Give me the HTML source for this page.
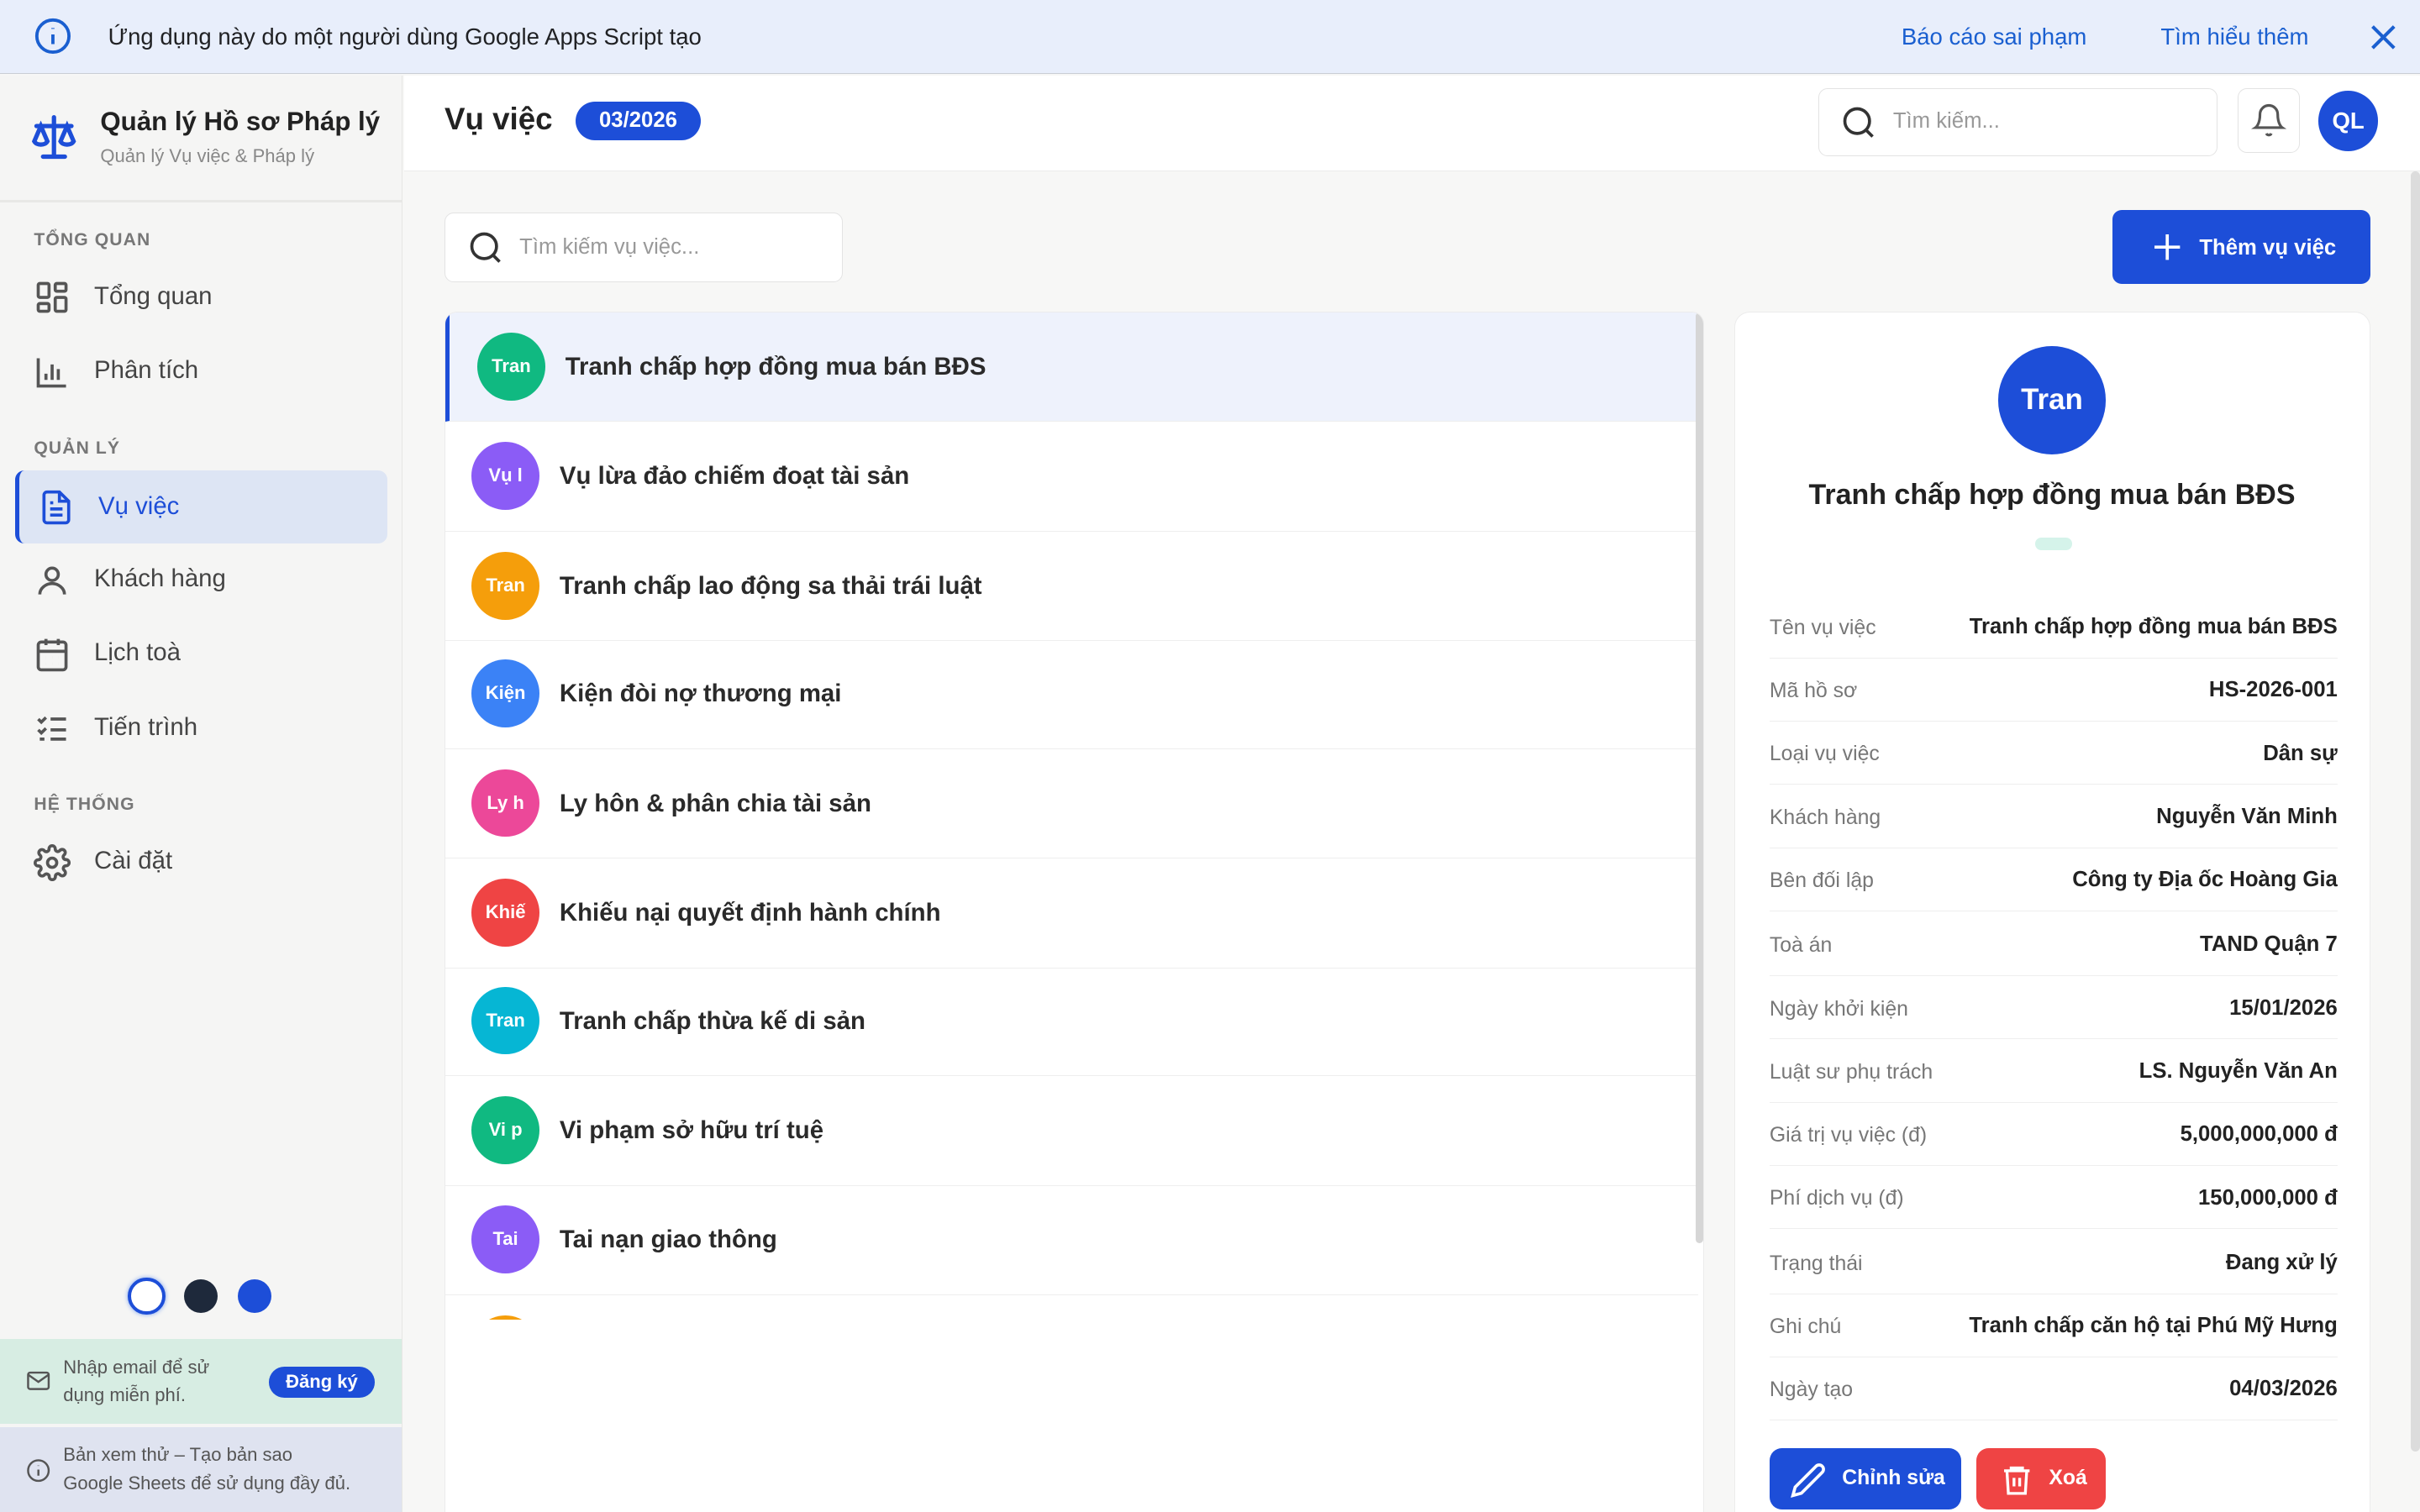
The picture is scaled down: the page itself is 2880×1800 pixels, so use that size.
<!DOCTYPE html>
<html><head><meta charset="utf-8">
<style>
html{zoom:1.836735;overflow:hidden;height:980px}
*{box-sizing:border-box;margin:0;padding:0}
body{width:1568px;height:980px;overflow:hidden;font-family:"Liberation Sans","Noto Sans CJK JP",sans-serif;background:#f7f7f6;color:#1f1f1f;position:relative}
.abs{position:absolute}
.banner{left:0;top:0;width:1568px;height:48px;background:#e8eefb;border-bottom:1px solid #c9cdd4}
.banner .t{left:70px;top:15px;font-size:15px;color:#202124}
.banner a{position:absolute;top:15px;font-size:15px;color:#1a5fd0;text-decoration:none}
.side{left:0;top:49px;width:261px;height:931px;background:#f5f5f4;border-right:1px solid #e6e6e4;overflow:hidden}
.logo{left:0;top:0;width:261px;height:82px;border-bottom:2px solid #e8e8e6}
.sec{left:22px;font-size:11.5px;font-weight:bold;color:#777;letter-spacing:.6px}
.item{left:10px;width:241px;height:47px;font-size:16px;color:#444}
.item span{position:absolute;left:51px;top:14px}
.item svg{position:absolute;left:12px;top:12px}
.main-h{left:262px;top:49px;width:1306px;height:62px;background:#fff;border-bottom:1px solid #ececec}
.row{position:absolute;left:0;width:812px;height:71px;border-bottom:1px solid #eeeeee}
.av{position:absolute;left:17px;top:13px;width:44px;height:44px;border-radius:50%;color:#fff;font-size:12px;font-weight:bold;text-align:center;line-height:44px}
.row .n{position:absolute;left:74px;top:26px;font-size:16px;font-weight:bold;color:#2a2a2a}
.d{position:absolute;left:22px;width:368px;height:41.2px;border-bottom:1px solid #eeeeee;font-size:13.5px}
.d .l{position:absolute;left:0;top:14px;color:#777}
.d .v{position:absolute;right:0;top:13px;font-weight:bold;color:#222;font-size:14px}
</style></head><body>

<div class="abs banner">
<svg class="abs" style="left:22px;top:11px" width="25" height="25" viewBox="0 0 24 24" fill="none" stroke="#1a5fd0" stroke-width="2"><circle cx="12" cy="12" r="10"/><path d="M12 11v6M12 7v.5"/></svg>
<div class="abs t">Ứng dụng này do một người dùng Google Apps Script tạo</div>
<a style="left:1232px">Báo cáo sai phạm</a>
<a style="left:1400px">Tìm hiểu thêm</a>
<svg class="abs" style="left:1534px;top:14px" width="20" height="20" viewBox="0 0 20 20" stroke="#1a5fd0" stroke-width="2.2"><path d="M3 3l14 14M17 3L3 17"/></svg>
</div>

<div class="abs side">
 <div class="abs logo">
  <svg class="abs" style="left:18px;top:22px" width="34" height="36" viewBox="0 0 24 24" fill="none" stroke="#1d4ed8" stroke-width="2" stroke-linecap="round"><path d="M12 3v17M7 21h10M4 7h16"/><path d="M6 7l-3 7c1 2 5 2 6 0z M18 7l-3 7c1 2 5 2 6 0z"/></svg>
  <div class="abs" style="left:65px;top:20px;font-size:17px;font-weight:bold;color:#222">Quản lý Hồ sơ Pháp lý</div>
  <div class="abs" style="left:65px;top:45px;font-size:12px;color:#888">Quản lý Vụ việc &amp; Pháp lý</div>
 </div>
 <div class="abs sec" style="top:100px">TỔNG QUAN</div>
 <div class="abs item" style="top:120px"><svg width="24" height="24" viewBox="0 0 24 24" fill="none" stroke="#555" stroke-width="2"><rect x="3" y="3" width="7" height="9" rx="1"/><rect x="14" y="3" width="7" height="5" rx="1"/><rect x="14" y="12" width="7" height="9" rx="1"/><rect x="3" y="16" width="7" height="5" rx="1"/></svg><span>Tổng quan</span></div>
 <div class="abs item" style="top:168px"><svg width="24" height="24" viewBox="0 0 24 24" fill="none" stroke="#555" stroke-width="2"><path d="M3 3v18h18M8 17v-4M12 17V7M16 17v-7"/></svg><span>Phân tích</span></div>
 <div class="abs sec" style="top:235px">QUẢN LÝ</div>
 <div class="abs item" style="top:256px;background:#dde5f4;border-left:3px solid #1d4ed8;border-radius:6px;color:#1d4ed8"><svg width="24" height="24" viewBox="0 0 24 24" fill="none" stroke="#1d4ed8" stroke-width="2"><path d="M14 2H6a2 2 0 0 0-2 2v16a2 2 0 0 0 2 2h12a2 2 0 0 0 2-2V8z"/><path d="M14 2v6h6M8 13h8M8 17h8M8 9h2"/></svg><span>Vụ việc</span></div>
 <div class="abs item" style="top:303px"><svg width="24" height="24" viewBox="0 0 24 24" fill="none" stroke="#555" stroke-width="2"><circle cx="12" cy="8" r="4"/><path d="M4 21c0-4 4-7 8-7s8 3 8 7"/></svg><span>Khách hàng</span></div>
 <div class="abs item" style="top:351px"><svg width="24" height="24" viewBox="0 0 24 24" fill="none" stroke="#555" stroke-width="2"><rect x="3" y="4" width="18" height="18" rx="2"/><path d="M16 2v4M8 2v4M3 10h18M8 14h.01M12 14h.01M16 14h.01M8 18h.01M12 18h.01M16 18h.01"/></svg><span>Lịch toà</span></div>
 <div class="abs item" style="top:399px"><svg width="24" height="24" viewBox="0 0 24 24" fill="none" stroke="#555" stroke-width="2"><path d="M3 6l2 2 3-3M11 6h10M3 13l2 2 3-3M11 13h10M11 19h10M4 19h3"/></svg><span>Tiến trình</span></div>
 <div class="abs sec" style="top:466px">HỆ THỐNG</div>
 <div class="abs item" style="top:486px"><svg width="24" height="24" viewBox="0 0 24 24" fill="none" stroke="#555" stroke-width="2"><circle cx="12" cy="12" r="3"/><path d="M19.4 15a1.7 1.7 0 0 0 .3 1.8l.1.1a2 2 0 1 1-2.8 2.8l-.1-.1a1.7 1.7 0 0 0-1.8-.3 1.7 1.7 0 0 0-1 1.5V21a2 2 0 1 1-4 0v-.1a1.7 1.7 0 0 0-1.1-1.5 1.7 1.7 0 0 0-1.8.3l-.1.1a2 2 0 1 1-2.8-2.8l.1-.1a1.7 1.7 0 0 0 .3-1.8 1.7 1.7 0 0 0-1.5-1H3a2 2 0 1 1 0-4h.1a1.7 1.7 0 0 0 1.5-1.1 1.7 1.7 0 0 0-.3-1.8l-.1-.1a2 2 0 1 1 2.8-2.8l.1.1a1.7 1.7 0 0 0 1.8.3H9a1.7 1.7 0 0 0 1-1.5V3a2 2 0 1 1 4 0v.1a1.7 1.7 0 0 0 1 1.5 1.7 1.7 0 0 0 1.8-.3l.1-.1a2 2 0 1 1 2.8 2.8l-.1.1a1.7 1.7 0 0 0-.3 1.8V9a1.7 1.7 0 0 0 1.5 1H21a2 2 0 1 1 0 4h-.1a1.7 1.7 0 0 0-1.5 1z"/></svg><span>Cài đặt</span></div>
 <div class="abs" style="left:83px;top:779px;width:24px;height:24px;border-radius:50%;background:#fff;border:2.5px solid #1d4ed8;box-shadow:0 0 3px #7aa0f0"></div>
 <div class="abs" style="left:119px;top:780px;width:22px;height:22px;border-radius:50%;background:#1e293b"></div>
 <div class="abs" style="left:154px;top:780px;width:22px;height:22px;border-radius:50%;background:#1d4ed8"></div>
 <div class="abs" style="left:0;top:819px;width:261px;height:55px;background:#d7ede3">
  <svg class="abs" style="left:17px;top:20px" width="16" height="14" viewBox="0 0 24 20" fill="none" stroke="#555" stroke-width="2"><rect x="2" y="2" width="20" height="16" rx="2"/><path d="M2 4l10 7 10-7"/></svg>
  <div class="abs" style="left:41px;top:9px;font-size:12px;line-height:18px;color:#555">Nhập email để sử<br>dụng miễn phí.</div>
  <div class="abs" style="left:174px;top:18px;width:69px;height:20px;border-radius:10px;background:#1d4ed8;color:#fff;font-size:12px;font-weight:bold;text-align:center;line-height:20px">Đăng ký</div>
 </div>
 <div class="abs" style="left:0;top:876px;width:261px;height:55px;background:#dfe3f0">
  <svg class="abs" style="left:17px;top:20px" width="16" height="16" viewBox="0 0 24 24" fill="none" stroke="#555" stroke-width="2"><circle cx="12" cy="12" r="10"/><path d="M12 11v6M12 7v.5"/></svg>
  <div class="abs" style="left:41px;top:9px;font-size:12px;line-height:18px;color:#555">Bản xem thử – Tạo bản sao<br>Google Sheets để sử dụng đầy đủ.</div>
 </div>
</div>

<div class="abs main-h">
 <div class="abs" style="left:26px;top:17px;font-size:20px;font-weight:bold;color:#222">Vụ việc</div>
 <div class="abs" style="left:111px;top:17px;width:81px;height:25px;border-radius:13px;background:#1d4ed8;color:#fff;font-size:14px;font-weight:bold;text-align:center;line-height:25px">03/2026</div>
 <div class="abs" style="left:916px;top:8px;width:259px;height:44px;border:1px solid #e3e3e3;border-radius:6px;background:#fff">
  <svg class="abs" style="left:14px;top:10px" width="24" height="24" viewBox="0 0 24 24" fill="none" stroke="#333" stroke-width="2"><circle cx="11" cy="11" r="8"/><path d="M21 21l-4.3-4.3"/></svg>
  <div class="abs" style="left:48px;top:13px;font-size:14px;color:#999">Tìm kiếm...</div>
 </div>
 <div class="abs" style="left:1188px;top:8px;width:40px;height:42px;border:1px solid #e3e3e3;border-radius:6px;background:#fff">
  <svg class="abs" style="left:8px;top:9px" width="23" height="23" viewBox="0 0 24 24" fill="none" stroke="#555" stroke-width="1.8"><path d="M6 8a6 6 0 0 1 12 0c0 7 3 9 3 9H3s3-2 3-9M10.3 21a1.9 1.9 0 0 0 3.4 0"/></svg>
 </div>
 <div class="abs" style="left:1240px;top:10px;width:39px;height:39px;border-radius:50%;background:#1d4ed8;color:#fff;font-weight:bold;font-size:15px;text-align:center;line-height:39px">QL</div>
</div>

<div class="abs" style="left:288px;top:138px;width:258px;height:45px;border:1px solid #e3e3e3;border-radius:6px;background:#fff">
 <svg class="abs" style="left:14px;top:10px" width="24" height="24" viewBox="0 0 24 24" fill="none" stroke="#333" stroke-width="2"><circle cx="11" cy="11" r="8"/><path d="M21 21l-4.3-4.3"/></svg>
 <div class="abs" style="left:48px;top:14px;font-size:14px;color:#999">Tìm kiếm vụ việc...</div>
</div>
<div class="abs" style="left:1369px;top:136px;width:167px;height:48px;border-radius:6px;background:#1d4ed8;color:#fff;font-size:14px;font-weight:bold">
 <svg class="abs" style="left:24px;top:13px" width="22" height="22" viewBox="0 0 24 24" stroke="#fff" stroke-width="2.2"><path d="M12 3v18M3 12h18"/></svg>
 <div class="abs" style="left:56px;top:17px">Thêm vụ việc</div>
</div>

<div class="abs" style="left:288px;top:202px;width:816px;height:778px;background:#fff;border:1px solid #ececec;border-bottom:0;border-radius:8px 8px 0 0;overflow:hidden">
 <div class="abs" style="left:0;top:0;width:816px;height:653px;overflow:hidden">
  <div class="row" style="top:0;background:#eef2fc;border-left:3px solid #1d4ed8"><div class="av" style="background:#10b981;left:18px">Tran</div><div class="n" style="left:75px">Tranh chấp hợp đồng mua bán BĐS</div></div>
  <div class="row" style="top:71px"><div class="av" style="background:#8b5cf6">Vụ l</div><div class="n">Vụ lừa đảo chiếm đoạt tài sản</div></div>
  <div class="row" style="top:142px"><div class="av" style="background:#f59e0b">Tran</div><div class="n">Tranh chấp lao động sa thải trái luật</div></div>
  <div class="row" style="top:212px"><div class="av" style="background:#3b82f6">Kiện</div><div class="n">Kiện đòi nợ thương mại</div></div>
  <div class="row" style="top:283px"><div class="av" style="background:#ec4899">Ly h</div><div class="n">Ly hôn &amp; phân chia tài sản</div></div>
  <div class="row" style="top:354px"><div class="av" style="background:#ef4444">Khiế</div><div class="n">Khiếu nại quyết định hành chính</div></div>
  <div class="row" style="top:424px"><div class="av" style="background:#06b6d4">Tran</div><div class="n">Tranh chấp thừa kế di sản</div></div>
  <div class="row" style="top:495px"><div class="av" style="background:#10b981">Vi p</div><div class="n">Vi phạm sở hữu trí tuệ</div></div>
  <div class="row" style="top:566px"><div class="av" style="background:#8b5cf6">Tai</div><div class="n">Tai nạn giao thông</div></div>
  <div class="row" style="top:637px;border:0"><div class="av" style="background:#f59e0b"></div></div>
 </div>
 <div class="abs" style="left:810px;top:0;width:5px;height:603px;background:#d6d6d6;border-radius:3px"></div>
</div>

<div class="abs" style="left:1124px;top:202px;width:412px;height:778px;background:#fff;border:1px solid #ececec;border-bottom:0;border-radius:10px 10px 0 0;overflow:hidden">
 <div class="abs" style="left:170px;top:22px;width:70px;height:70px;border-radius:50%;background:#1d4ed8;color:#fff;font-size:19px;font-weight:bold;text-align:center;line-height:70px">Tran</div>
 <div class="abs" style="left:0;top:108px;width:410px;text-align:center;font-size:18.5px;font-weight:bold;color:#222">Tranh chấp hợp đồng mua bán BĐS</div>
 <div class="abs" style="left:194px;top:146px;width:24px;height:8px;border-radius:4px;background:#d5f3ea"></div>
 <div class="d" style="top:183px"><span class="l">Tên vụ việc</span><span class="v">Tranh chấp hợp đồng mua bán BĐS</span></div>
 <div class="d" style="top:224px"><span class="l">Mã hồ sơ</span><span class="v">HS-2026-001</span></div>
 <div class="d" style="top:265px"><span class="l">Loại vụ việc</span><span class="v">Dân sự</span></div>
 <div class="d" style="top:306px"><span class="l">Khách hàng</span><span class="v">Nguyễn Văn Minh</span></div>
 <div class="d" style="top:347px"><span class="l">Bên đối lập</span><span class="v">Công ty Địa ốc Hoàng Gia</span></div>
 <div class="d" style="top:389px"><span class="l">Toà án</span><span class="v">TAND Quận 7</span></div>
 <div class="d" style="top:430px"><span class="l">Ngày khởi kiện</span><span class="v">15/01/2026</span></div>
 <div class="d" style="top:471px"><span class="l">Luật sư phụ trách</span><span class="v">LS. Nguyễn Văn An</span></div>
 <div class="d" style="top:512px"><span class="l">Giá trị vụ việc (đ)</span><span class="v">5,000,000,000 đ</span></div>
 <div class="d" style="top:553px"><span class="l">Phí dịch vụ (đ)</span><span class="v">150,000,000 đ</span></div>
 <div class="d" style="top:595px"><span class="l">Trạng thái</span><span class="v">Đang xử lý</span></div>
 <div class="d" style="top:636px"><span class="l">Ghi chú</span><span class="v">Tranh chấp căn hộ tại Phú Mỹ Hưng</span></div>
 <div class="d" style="top:677px"><span class="l">Ngày tạo</span><span class="v">04/03/2026</span></div>
 <div class="abs" style="left:22px;top:736px;width:124px;height:40px;border-radius:8px;background:#1d4ed8;color:#fff;font-size:13.5px;font-weight:bold">
  <svg class="abs" style="left:13px;top:9px" width="24" height="24" viewBox="0 0 24 24" fill="none" stroke="#fff" stroke-width="2"><path d="M17 3a2.8 2.8 0 1 1 4 4L7.5 20.5 2 22l1.5-5.5z"/></svg>
  <div class="abs" style="left:47px;top:12px">Chỉnh sửa</div>
 </div>
 <div class="abs" style="left:156px;top:736px;width:84px;height:40px;border-radius:8px;background:#ef4444;color:#fff;font-size:13.5px;font-weight:bold">
  <svg class="abs" style="left:15px;top:8px" width="22" height="24" viewBox="0 0 24 24" fill="none" stroke="#fff" stroke-width="2"><path d="M3 6h18M8 6V4h8v2M5 6l1 16h12l1-16M10 11v6M14 11v6"/></svg>
  <div class="abs" style="left:47px;top:12px">Xoá</div>
 </div>
</div>

<div class="abs" style="left:1562px;top:111px;width:6px;height:830px;background:#dcdcdc;border-radius:3px"></div>
</body></html>
